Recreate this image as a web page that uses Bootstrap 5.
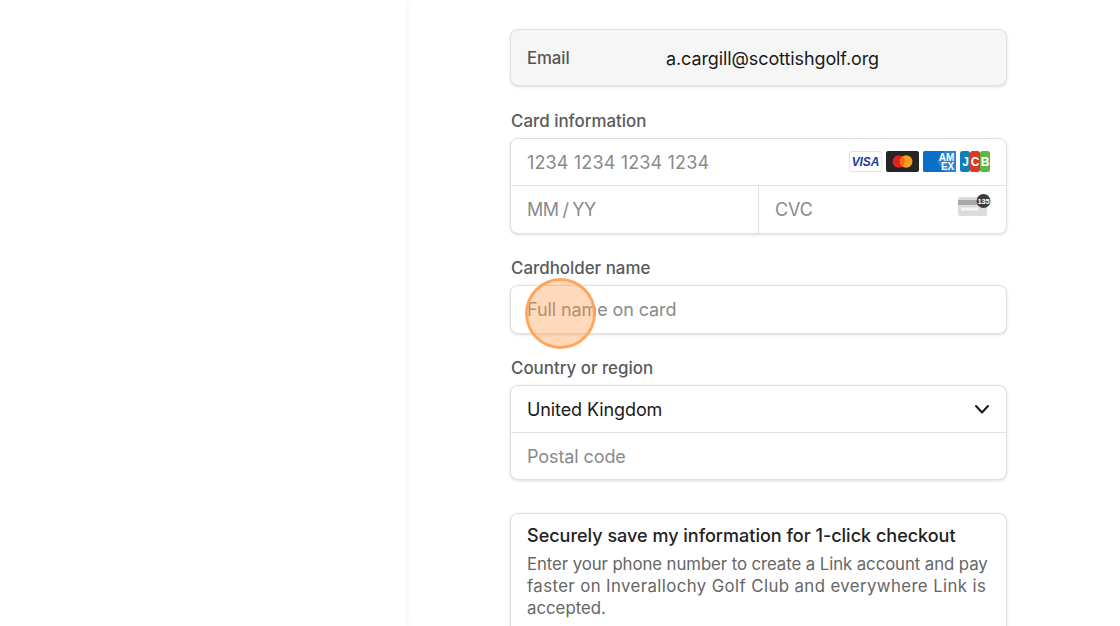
<!DOCTYPE html>
<html lang="en"><head><meta charset="utf-8"><title>Checkout</title>
<link href="https://cdn.jsdelivr.net/npm/bootstrap@5.3.0/dist/css/bootstrap.min.css" rel="stylesheet">
<style>
html,body{height:626px;overflow:hidden;background:#fff}
body{font-family:Inter,"Liberation Sans",sans-serif;color:#1a1a1a;-webkit-font-smoothing:antialiased}
.pay-shell{width:1120px;height:626px;overflow:hidden;position:relative}
.pay-left{width:406px;flex:none;box-shadow:3px 0 6px rgba(0,0,0,.035);height:626px}
.pay-form{width:497px;margin-left:104px;padding-top:29px;flex:none}
.pay-box{border:1px solid #e0e0e0;border-radius:8px;box-shadow:0 1px 3px rgba(0,0,0,.14);background:#fff;overflow:hidden;font-size:18px;letter-spacing:-.1px}
.pay-email{height:57px;background:#f6f6f6;padding:1px 16px 0}
.pay-email-key{width:139px;color:#555;font-weight:500;font-size:16.8px;padding-top:1px}
.pay-lab{font-size:16.9px;font-weight:500;color:#5a5a5a;line-height:20px;margin-bottom:7px;padding-left:1px;margin-top:24.5px}
.pay-row{height:46.5px;padding:0 16px;color:#8a8a8a}
.pay-row+.pay-row,.pay-split{border-top:1px solid #e0e0e0}
.pay-digits{letter-spacing:.15px;padding-top:1px}
.pay-half{flex:1 1 0;height:46.5px}
.pay-half:first-child{flex:none;width:247px;word-spacing:-1px;letter-spacing:-.4px}
.pay-half+.pay-half{border-left:1px solid #e0e0e0;border-top:0}
.pay-dark{color:#1a1a1a;height:46px}
.pay-row.pay-postal{height:47px;padding-top:1px}
.pay-save{margin-top:33px;padding:10px 16px 40px;height:160px}
.pay-save-t{font-size:18px;font-weight:500;line-height:24px;color:#222;margin-bottom:5px;letter-spacing:0}
.pay-save-d{font-size:16.8px;line-height:22px;color:#666;white-space:nowrap}
.pay-line-a{display:block;letter-spacing:-.08px}
.pay-line-b{display:block;letter-spacing:.4px}
.pay-line-c{display:block;letter-spacing:0}
.pay-cursor{position:absolute;left:525px;top:278px;width:71px;height:71px;border-radius:50%;background:rgba(255,150,60,.36);border:3px solid rgba(255,163,88,.95)}
.pay-logos{gap:4px}
.pay-logos svg{display:block}
.pay-cvc-ico{margin-top:-8px;margin-right:-1px}
</style></head><body>
<div class="pay-shell d-flex">
<div class="pay-left"></div>
<main class="pay-form">
<div class="pay-box pay-email d-flex align-items-center"><span class="pay-email-key">Email</span><span>a.cargill@scottishgolf.org</span></div>
<div class="pay-lab">Card information</div>
<div class="pay-box">
<div class="pay-row d-flex align-items-center justify-content-between"><span class="pay-digits">1234 1234 1234 1234</span>
<span class="d-flex pay-logos">
<svg width="33" height="21" viewBox="0 0 33 21"><rect x=".5" y=".5" width="32" height="20" rx="2" fill="#fff" stroke="#e3e3e3"/><text x="16.5" y="14.800" text-anchor="middle" font-family="Liberation Sans" font-size="12" font-weight="700" font-style="italic" fill="#1a3b9c">VISA</text></svg>
<svg width="33" height="21" viewBox="0 0 33 21"><rect width="33" height="21" rx="2" fill="#252525"/><circle cx="12.8" cy="10.5" r="6.2" fill="#e2231a"/><circle cx="20.2" cy="10.5" r="6.2" fill="#f79e1b"/><path d="M16.5 5.6a6.2 6.2 0 0 1 0 9.8a6.2 6.2 0 0 1 0-9.8z" fill="#f26a1b"/></svg>
<svg width="33" height="21" viewBox="0 0 33 21"><rect width="33" height="21" rx="1.5" fill="#0a6fc9"/><path d="M33 0v21H21L14 10.500 21 0z" fill="#2a84d6"/><text x="23.500" y="10" text-anchor="middle" font-family="Liberation Sans" font-size="10" font-weight="700" fill="#fff">AM</text><text x="24.500" y="19" text-anchor="middle" font-family="Liberation Sans" font-size="10" font-weight="700" fill="#fff">EX</text></svg>
<svg width="30" height="21" viewBox="0 0 30 21"><rect width="10" height="21" rx="2.5" fill="#0e7fb8"/><rect x="10" width="10" height="21" rx="2.5" fill="#d93a22"/><rect x="20" width="10" height="21" rx="2.5" fill="#5cb646"/><text x="5.500" y="15" text-anchor="middle" font-family="Liberation Sans" font-size="12" font-weight="700" fill="#fff">J</text><text x="15" y="15" text-anchor="middle" font-family="Liberation Sans" font-size="12" font-weight="700" fill="#fff">C</text><text x="25" y="15" text-anchor="middle" font-family="Liberation Sans" font-size="12" font-weight="700" fill="#fff">B</text></svg>
</span></div>
<div class="d-flex pay-split">
<div class="pay-half d-flex align-items-center pay-row">MM / YY</div>
<div class="pay-half d-flex align-items-center justify-content-between pay-row">CVC
<svg class="pay-cvc-ico" width="33" height="22" viewBox="0 0 33 22"><rect x="0" y="3" width="29" height="19" rx="2" fill="#dcdcdc"/><rect y="6" width="29" height="5" fill="#a9a9a9"/><rect x="3" y="13.500" width="17" height="3" fill="#f4f4f4"/><circle cx="25.500" cy="7" r="7" fill="#3c3c3c"/><text x="25.500" y="9.600" text-anchor="middle" font-family="Liberation Sans" font-size="7.500" font-weight="700" fill="#fff">135</text></svg>
</div>
</div>
</div>
<div class="pay-lab">Cardholder name</div>
<div class="pay-box"><div class="pay-row d-flex align-items-center">Full name on card</div></div>
<div class="pay-lab">Country or region</div>
<div class="pay-box">
<div class="pay-row pay-dark d-flex align-items-center justify-content-between"><span>United Kingdom</span>
<svg width="16" height="11" viewBox="0 0 16 11" fill="none" stroke="#1a1a1a" stroke-width="2" stroke-linecap="round" stroke-linejoin="round"><path d="M2 2l6 6.500 6-6.500"/></svg></div>
<div class="pay-row pay-postal d-flex align-items-center">Postal code</div>
</div>
<div class="pay-box pay-save">
<div class="pay-save-t">Securely save my information for 1-click checkout</div>
<div class="pay-save-d"><span class="pay-line-a">Enter your phone number to create a Link account and pay</span><span class="pay-line-b">faster on Inverallochy Golf Club and everywhere Link is</span><span class="pay-line-c">accepted.</span></div>
</div>
</main>
</div>
<div class="pay-cursor"></div>
<script src="https://cdn.jsdelivr.net/npm/bootstrap@5.3.0/dist/js/bootstrap.bundle.min.js"></script>
</body></html>
